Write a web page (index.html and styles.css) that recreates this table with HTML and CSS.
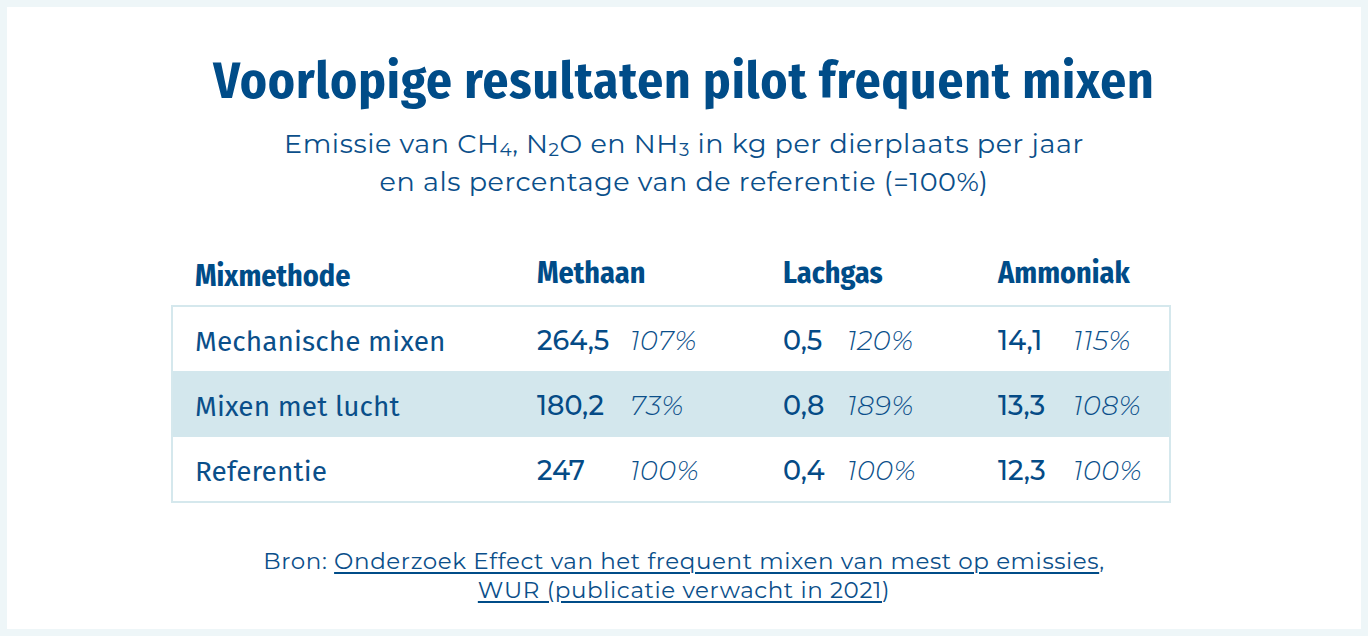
FILE: index.html
```html
<!DOCTYPE html>
<html lang="nl">
<head>
<meta charset="utf-8">
<title>Voorlopige resultaten pilot frequent mixen</title>
<link rel="stylesheet" href="styles.css">
</head>
<body>
<main class="card">
  <h1 class="title">Voorlopige resultaten pilot frequent mixen</h1>
  <p class="subtitle">Emissie van CH<sub>4</sub>, N<sub>2</sub>O en NH<sub>3</sub> in kg per dierplaats per jaar<br>en als percentage van de referentie (=100%)</p>

  <section class="results">
    <div class="grid head">
      <div class="h-label">Mixmethode</div>
      <div class="h-gas">Methaan</div>
      <div class="h-gas">Lachgas</div>
      <div class="h-gas">Ammoniak</div>
    </div>
    <div class="box">
      <div class="grid row">
        <div class="label">Mechanische mixen</div>
        <div class="num">264,5</div><div class="pct">107%</div>
        <div class="num">0,5</div><div class="pct">120%</div>
        <div class="num">14,1</div><div class="pct">115%</div>
      </div>
      <div class="grid row alt">
        <div class="label">Mixen met lucht</div>
        <div class="num">180,2</div><div class="pct">73%</div>
        <div class="num">0,8</div><div class="pct">189%</div>
        <div class="num">13,3</div><div class="pct">108%</div>
      </div>
      <div class="grid row">
        <div class="label">Referentie</div>
        <div class="num">247</div><div class="pct">100%</div>
        <div class="num">0,4</div><div class="pct">100%</div>
        <div class="num">12,3</div><div class="pct">100%</div>
      </div>
    </div>
  </section>

  <p class="source">Bron: <a href="#">Onderzoek Effect van het frequent mixen van mest op emissies</a>,<br><a href="#">WUR (publicatie verwacht in 2021</a>)</p>
</main>
</body>
</html>
```

FILE: styles.css
```css
* { box-sizing: border-box; }

html, body {
  margin: 0;
  height: 100%;
}

body {
  background: #eef6f8;
  padding: 7px;
  color: #064e89;
}

.card {
  background: #ffffff;
  height: 622px;
  display: flex;
  flex-direction: column;
  align-items: center;
}

.title {
  margin: 44px 0 0;
  font-family: "Fira Sans Condensed", "Lato", sans-serif;
  font-weight: 700;
  font-size: 51px;
  line-height: 60px;
  letter-spacing: 0.9px;
  color: #004c88;
}

.subtitle {
  margin: 14px 0 0;
  font-family: "Montserrat", "Inter", sans-serif;
  font-weight: 400;
  font-size: 27px;
  line-height: 38px;
  letter-spacing: 0.57px;
  text-align: center;
  color: #0b4f8a;
}

.subtitle sub {
  font-size: 0.68em;
  vertical-align: -0.15em;
  line-height: 0;
}

.results {
  width: 1000px;
  margin: 44px 26px 0 0;
}

.grid {
  display: grid;
  grid-template-columns: 364px 93px 153px 64px 151px 75px 96px;
  align-items: center;
}

.head {
  padding: 0 2px;
  height: 60px;
  font-family: "Fira Sans Condensed", "Lato", sans-serif;
  font-weight: 700;
  font-size: 30px;
  color: #004c88;
}

.h-label { padding-left: 22px; padding-top: 2px; }
.h-gas { grid-column: span 2; padding-bottom: 4px; }

.box {
  border: 2px solid #d5e8ed;
}

.row {
  height: 64px;
}

.row.alt {
  background: #d3e7ed;
  height: 66px;
}

.label {
  padding-left: 22px;
  padding-top: 5px;
  font-family: "Fira Sans", "Open Sans", sans-serif;
  font-size: 28px;
  letter-spacing: 0.1px;
  color: #0a4f8a;
}

.num {
  padding-top: 3px;
  font-family: "Montserrat", "Inter", sans-serif;
  font-weight: 500;
  font-size: 27px;
  color: #054b86;
}

.pct {
  padding-top: 3px;
  font-family: "Montserrat", "Inter", sans-serif;
  font-weight: 300;
  font-style: italic;
  font-size: 27px;
  letter-spacing: 0.5px;
  color: #0b4f8a;
}

.source {
  margin: 44px 0 0;
  font-family: "Montserrat", "Inter", sans-serif;
  font-weight: 400;
  font-size: 23px;
  line-height: 29px;
  letter-spacing: 0.6px;
  text-align: center;
  color: #0b4f8a;
}

.source a {
  color: #0b4f8a;
  text-decoration: underline;
  text-decoration-color: #004c88;
  text-decoration-thickness: 2px;
  text-underline-offset: 3px;
}
```
